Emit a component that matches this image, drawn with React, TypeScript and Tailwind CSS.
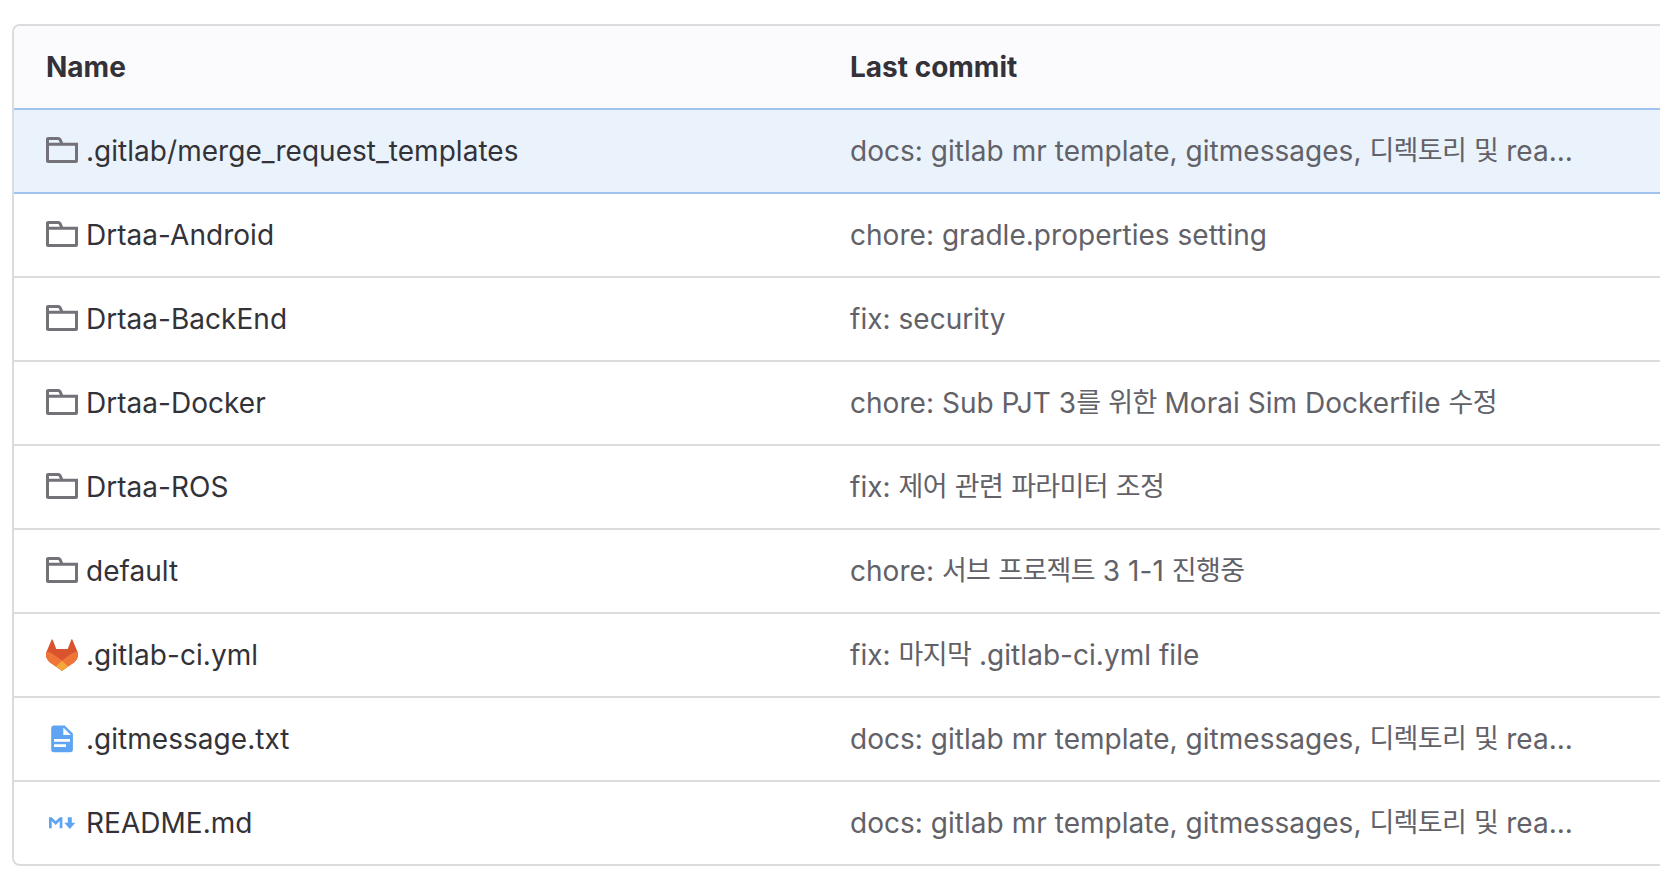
import type { ReactNode } from 'react'
import clsx from 'clsx'

interface TreeEntry {
  name: string
  commit: string
  icon: () => ReactNode
  active?: boolean
}

const FolderIcon = () => (
  <svg viewBox="0 0 32 32" className="h-8 w-8 shrink-0" fill="none" stroke="#737278" strokeWidth="3">
    <path d="M1.500 9.200H30.500V26a.6.6 0 0 1-.6.6H2.100a.6.6 0 0 1-.6-.6V4.100a.6.6 0 0 1 .6-.6H12a2.500 2.500 0 0 1 2.200 1.300L16 9" />
  </svg>
)

const GitlabIcon = () => (
  <svg viewBox="0 0 32 32" className="h-8 w-8 shrink-0">
    <path
      d="M6.100.300c-.2 0-.4.200-.5.500L.6 12.600c-1.400 4 0 8.300 3.400 10.800L16 31.800l12-8.400c3.400-2.500 4.800-6.800 3.400-10.800L26.400.8c-.2-.6-.9-.6-1.100 0L21.700 10H10.300L6.700.8c-.1-.3-.3-.5-.6-.5Z"
      fill="#d9532f"
    />
    <path
      d="M.6 12.600C3.700 13.200 6.600 14.600 9.200 16.500L16 21.500l6.800-5c2.600-1.900 5.500-3.300 8.600-3.900 1.400 4 0 8.300-3.400 10.800l-12 8.400-12-8.400C.6 20.900-.8 16.600.6 12.600Z"
      fill="#ee7437"
    />
    <path d="M16 21.700l6.100 5.800-6.100 4.300-6.100-4.300Z" fill="#f3a83b" />
  </svg>
)

const DocumentIcon = () => (
  <svg viewBox="0 0 32 32" className="h-8 w-8 shrink-0">
    <path
      d="M7.700 2.500H18.700l8.200 8v16.100a2.700 2.700 0 0 1-2.700 2.700H8a2.700 2.700 0 0 1-2.800-2.700V5.200a2.700 2.700 0 0 1 2.500-2.700ZM17.300 4.500V12h7.500ZM8 16v2.700h16V16Zm0 5.300V24h12v-2.700Z"
      fill="#5ea4f3"
      fillRule="evenodd"
    />
  </svg>
)

const MarkdownIcon = () => (
  <svg viewBox="0 0 32 32" className="h-8 w-8 shrink-0" fill="#5ea4f3">
    <path d="M3 21.300V10.300h2.700l4 4 4-4h2.700v11h-2.700v-7.200l-4 4-4-4v7.200Z" />
    <path d="M21.800 10.200h4v5.600h3.500L23.800 22.100l-5.500-6.300h3.500Z" />
  </svg>
)

const entries: TreeEntry[] = [
  {
    name: '.gitlab/merge_request_templates',
    commit: 'docs: gitlab mr template, gitmessages, 디렉토리 및 rea...',
    icon: FolderIcon,
    active: true,
  },
  { name: 'Drtaa-Android', commit: 'chore: gradle.properties setting', icon: FolderIcon },
  { name: 'Drtaa-BackEnd', commit: 'fix: security', icon: FolderIcon },
  {
    name: 'Drtaa-Docker',
    commit: 'chore: Sub PJT 3를 위한 Morai Sim Dockerfile 수정',
    icon: FolderIcon,
  },
  { name: 'Drtaa-ROS', commit: 'fix: 제어 관련 파라미터 조정', icon: FolderIcon },
  { name: 'default', commit: 'chore: 서브 프로젝트 3 1-1 진행중', icon: FolderIcon },
  { name: '.gitlab-ci.yml', commit: 'fix: 마지막 .gitlab-ci.yml file', icon: GitlabIcon },
  {
    name: '.gitmessage.txt',
    commit: 'docs: gitlab mr template, gitmessages, 디렉토리 및 rea...',
    icon: DocumentIcon,
  },
  {
    name: 'README.md',
    commit: 'docs: gitlab mr template, gitmessages, 디렉토리 및 rea...',
    icon: MarkdownIcon,
  },
]

// Hangul is set a little smaller and tighter than the Latin text around it
const CommitMessage = ({ text }: { text: string }) => (
  <>
    {text.split(/([가-힣]+)/).map((part, i) =>
      i % 2 ? (
        <span key={i} className="align-[1px] text-[27px] leading-none tracking-[-0.65px]">
          {part}
        </span>
      ) : (
        part
      ),
    )}
  </>
)

const TreeRow = ({ entry, last }: { entry: TreeEntry; last: boolean }) => {
  const { name, commit, icon: Icon, active } = entry

  return (
    <div
      className={clsx(
        'grid grid-cols-[804px_1fr] items-center pl-8',
        last ? 'h-[82px]' : 'h-[84px] border-b-2',
        active ? 'border-[#a0c4ee] bg-[#eaf3fb]' : 'border-[#dcdcde]',
      )}
    >
      <div className="flex items-center gap-2 tracking-[0.03px] text-[#333238]">
        <Icon />
        <span>{name}</span>
      </div>
      <div className="whitespace-nowrap tracking-[0.03px] text-[#626168]">
        <CommitMessage text={commit} />
      </div>
    </div>
  )
}

const App = () => (
  <div className="h-[896px] w-full overflow-hidden bg-white pl-3 pt-6 font-['Inter','Noto_Sans_CJK_KR',sans-serif] text-[28px] leading-10">
    <div className="overflow-hidden rounded-l-lg border-2 border-r-0 border-[#dcdcde]">
      <div className="grid h-[84px] grid-cols-[804px_1fr] items-center border-b-2 border-[#a0c4ee] bg-[#fbfafd] pl-8 font-bold text-[#333238]">
        <div>Name</div>
        <div>Last commit</div>
      </div>
      {entries.map((entry, i) => (
        <TreeRow key={entry.name} entry={entry} last={i === entries.length - 1} />
      ))}
    </div>
  </div>
)

export default App
